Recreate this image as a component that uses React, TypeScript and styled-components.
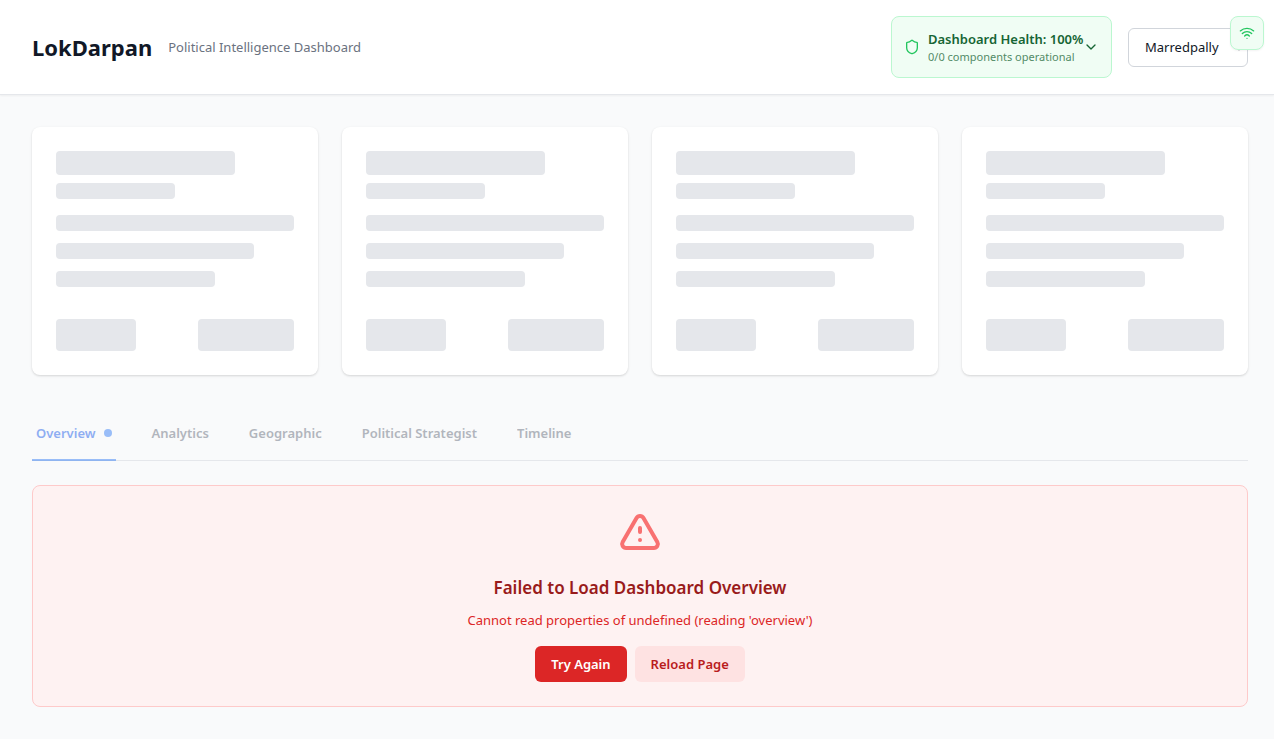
import React, { useState } from 'react';
import styled, { createGlobalStyle } from 'styled-components';
import { ChevronDown, Shield, Wifi } from 'lucide-react';

const GlobalStyle = createGlobalStyle`
  *, *::before, *::after { box-sizing: border-box; }
  body {
    margin: 0;
    background: #f9fafb;
    color: #111827;
    font-family: "Segoe UI", "Noto Sans", "Open Sans", sans-serif;
    font-size: 13px;
    line-height: 20px;
  }
  button, select { font: inherit; }
  h1, h2, p { margin: 0; }
  svg { flex-shrink: 0; }
`;

const Page = styled.div`
  min-height: 100vh;
`;

const Header = styled.header`
  display: flex;
  align-items: center;
  justify-content: space-between;
  padding: 16px 26px 16px 32px;
  background: #fff;
  border-bottom: 1px solid #e5e7eb;
  box-shadow: 0 1px 2px rgba(0, 0, 0, 0.05);
`;

const HeaderGroup = styled.div`
  display: flex;
  align-items: center;
  gap: 16px;
`;

const Brand = styled.h1`
  font-size: 22px;
  line-height: 32px;
  font-weight: 700;
`;

const Tagline = styled.p`
  color: #6b7280;
`;

const HealthButton = styled.button`
  display: flex;
  align-items: center;
  width: 221px;
  padding: 12px;
  border: 1px solid #bbf7d0;
  border-radius: 8px;
  background: #f0fdf4;
  color: #166534;
  text-align: left;
  cursor: pointer;
`;

const HealthText = styled.span`
  display: flex;
  flex: 1;
  flex-direction: column;
  min-width: 0;
  padding-left: 8px;
  white-space: nowrap;
`;

const HealthTitle = styled.span`
  font-weight: 600;
`;

const HealthDetail = styled.span`
  font-size: 11px;
  line-height: 16px;
  opacity: 0.75;
`;

const WardSelect = styled.select`
  width: 120px;
  height: 39px;
  padding: 0 12px;
  border: 1px solid #d1d5db;
  border-radius: 6px;
  background: #fff;
  color: #111827;
`;

const ConnectionButton = styled.button`
  position: fixed;
  top: 16px;
  right: 10px;
  display: flex;
  padding: 8px;
  border: 1px solid #bbf7d0;
  border-radius: 8px;
  background: #f0fdf4;
  color: #22c55e;
  box-shadow: 0 1px 2px rgba(0, 0, 0, 0.05);
  cursor: pointer;
`;

const Main = styled.main`
  padding: 32px 26px 32px 32px;
`;

const CardGrid = styled.section`
  display: grid;
  grid-template-columns: repeat(4, 1fr);
  gap: 24px;
  margin-bottom: 32px;
`;

const Card = styled.div`
  padding: 24px;
  border-radius: 8px;
  background: #fff;
  box-shadow: 0 1px 3px rgba(0, 0, 0, 0.1), 0 1px 2px rgba(0, 0, 0, 0.06);
`;

const Lines = styled.div<{ $gap: number; $after: number }>`
  display: flex;
  flex-direction: column;
  gap: ${({ $gap }) => $gap}px;
  margin-bottom: ${({ $after }) => $after}px;
`;

const CardFooter = styled.div`
  display: flex;
  justify-content: space-between;
`;

const Bone = styled.div<{ $width: string; $height: number }>`
  width: ${({ $width }) => $width};
  height: ${({ $height }) => $height}px;
  border-radius: 4px;
  background: #e5e7eb;
`;

const Tabs = styled.nav`
  display: flex;
  gap: 32px;
  margin-bottom: 24px;
  box-shadow: inset 0 -1px #e5e7eb;
`;

const Tab = styled.button<{ $active: boolean }>`
  display: flex;
  align-items: center;
  gap: 8px;
  padding: 16px 4px;
  border: 0;
  border-bottom: 2px solid ${({ $active }) => ($active ? '#3b82f6' : 'transparent')};
  background: none;
  color: ${({ $active }) => ($active ? '#2563eb' : '#6b7280')};
  font-weight: 600;
  opacity: 0.5;
  cursor: pointer;
`;

const ActiveDot = styled.span`
  width: 8px;
  height: 8px;
  border-radius: 50%;
  background: #3b82f6;
`;

const ErrorPanel = styled.section`
  display: flex;
  flex-direction: column;
  align-items: center;
  padding: 24px;
  border: 1px solid #fecaca;
  border-radius: 8px;
  background: #fef2f2;
  text-align: center;
`;

const ErrorIcon = styled.svg`
  width: 48px;
  height: 48px;
  margin-bottom: 16px;
  fill: none;
  stroke: #f87171;
  stroke-width: 2;
  stroke-linecap: round;
  stroke-linejoin: round;
`;

const ErrorTitle = styled.h2`
  margin-bottom: 8px;
  color: #991b1b;
  font-size: 17px;
  line-height: 28px;
  font-weight: 600;
`;

const ErrorMessage = styled.p`
  margin-bottom: 16px;
  color: #dc2626;
`;

const Actions = styled.div`
  display: flex;
  gap: 8px;
`;

const ActionButton = styled.button<{ $primary?: boolean }>`
  padding: 8px 16px;
  border: 0;
  border-radius: 6px;
  background: ${({ $primary }) => ($primary ? '#dc2626' : '#fee2e2')};
  color: ${({ $primary }) => ($primary ? '#fff' : '#b91c1c')};
  font-weight: 600;
  cursor: pointer;
`;

const tabs = ['Overview', 'Analytics', 'Geographic', 'Political Strategist', 'Timeline'];

function SkeletonCard() {
  return (
    <Card>
      <Lines $gap={8} $after={16}>
        <Bone $width="75%" $height={24} />
        <Bone $width="50%" $height={16} />
      </Lines>
      <Lines $gap={12} $after={32}>
        <Bone $width="100%" $height={16} />
        <Bone $width="83.333%" $height={16} />
        <Bone $width="66.667%" $height={16} />
      </Lines>
      <CardFooter>
        <Bone $width="80px" $height={32} />
        <Bone $width="96px" $height={32} />
      </CardFooter>
    </Card>
  );
}

export default function App() {
  const [active, setActive] = useState('Overview');

  return (
    <Page>
      <GlobalStyle />
      <Header>
        <HeaderGroup>
          <Brand>LokDarpan</Brand>
          <Tagline>Political Intelligence Dashboard</Tagline>
        </HeaderGroup>
        <HeaderGroup>
          <HealthButton type="button">
            <Shield size={16} color="#22c55e" />
            <HealthText>
              <HealthTitle>Dashboard Health: 100%</HealthTitle>
              <HealthDetail>0/0 components operational</HealthDetail>
            </HealthText>
            <ChevronDown size={16} />
          </HealthButton>
          <WardSelect aria-label="Ward" defaultValue="Marredpally">
            <option>Marredpally</option>
          </WardSelect>
        </HeaderGroup>
      </Header>
      <ConnectionButton type="button" aria-label="Connection status">
        <Wifi size={16} />
      </ConnectionButton>
      <Main>
        <CardGrid aria-busy="true">
          {[0, 1, 2, 3].map((card) => (
            <SkeletonCard key={card} />
          ))}
        </CardGrid>
        <Tabs>
          {tabs.map((tab) => (
            <Tab key={tab} type="button" $active={tab === active} onClick={() => setActive(tab)}>
              {tab}
              {tab === active && <ActiveDot />}
            </Tab>
          ))}
        </Tabs>
        <ErrorPanel role="alert">
          <ErrorIcon viewBox="0 0 24 24" aria-hidden="true">
            <path d="M12 9v2m0 4h.01m-6.938 4h13.856c1.54 0 2.502-1.667 1.732-3L13.732 4c-.77-1.333-2.694-1.333-3.464 0L3.34 16c-.77 1.333.192 3 1.732 3z" />
          </ErrorIcon>
          <ErrorTitle>Failed to Load Dashboard Overview</ErrorTitle>
          <ErrorMessage>Cannot read properties of undefined (reading 'overview')</ErrorMessage>
          <Actions>
            <ActionButton type="button" $primary>
              Try Again
            </ActionButton>
            <ActionButton type="button">Reload Page</ActionButton>
          </Actions>
        </ErrorPanel>
      </Main>
    </Page>
  );
}
